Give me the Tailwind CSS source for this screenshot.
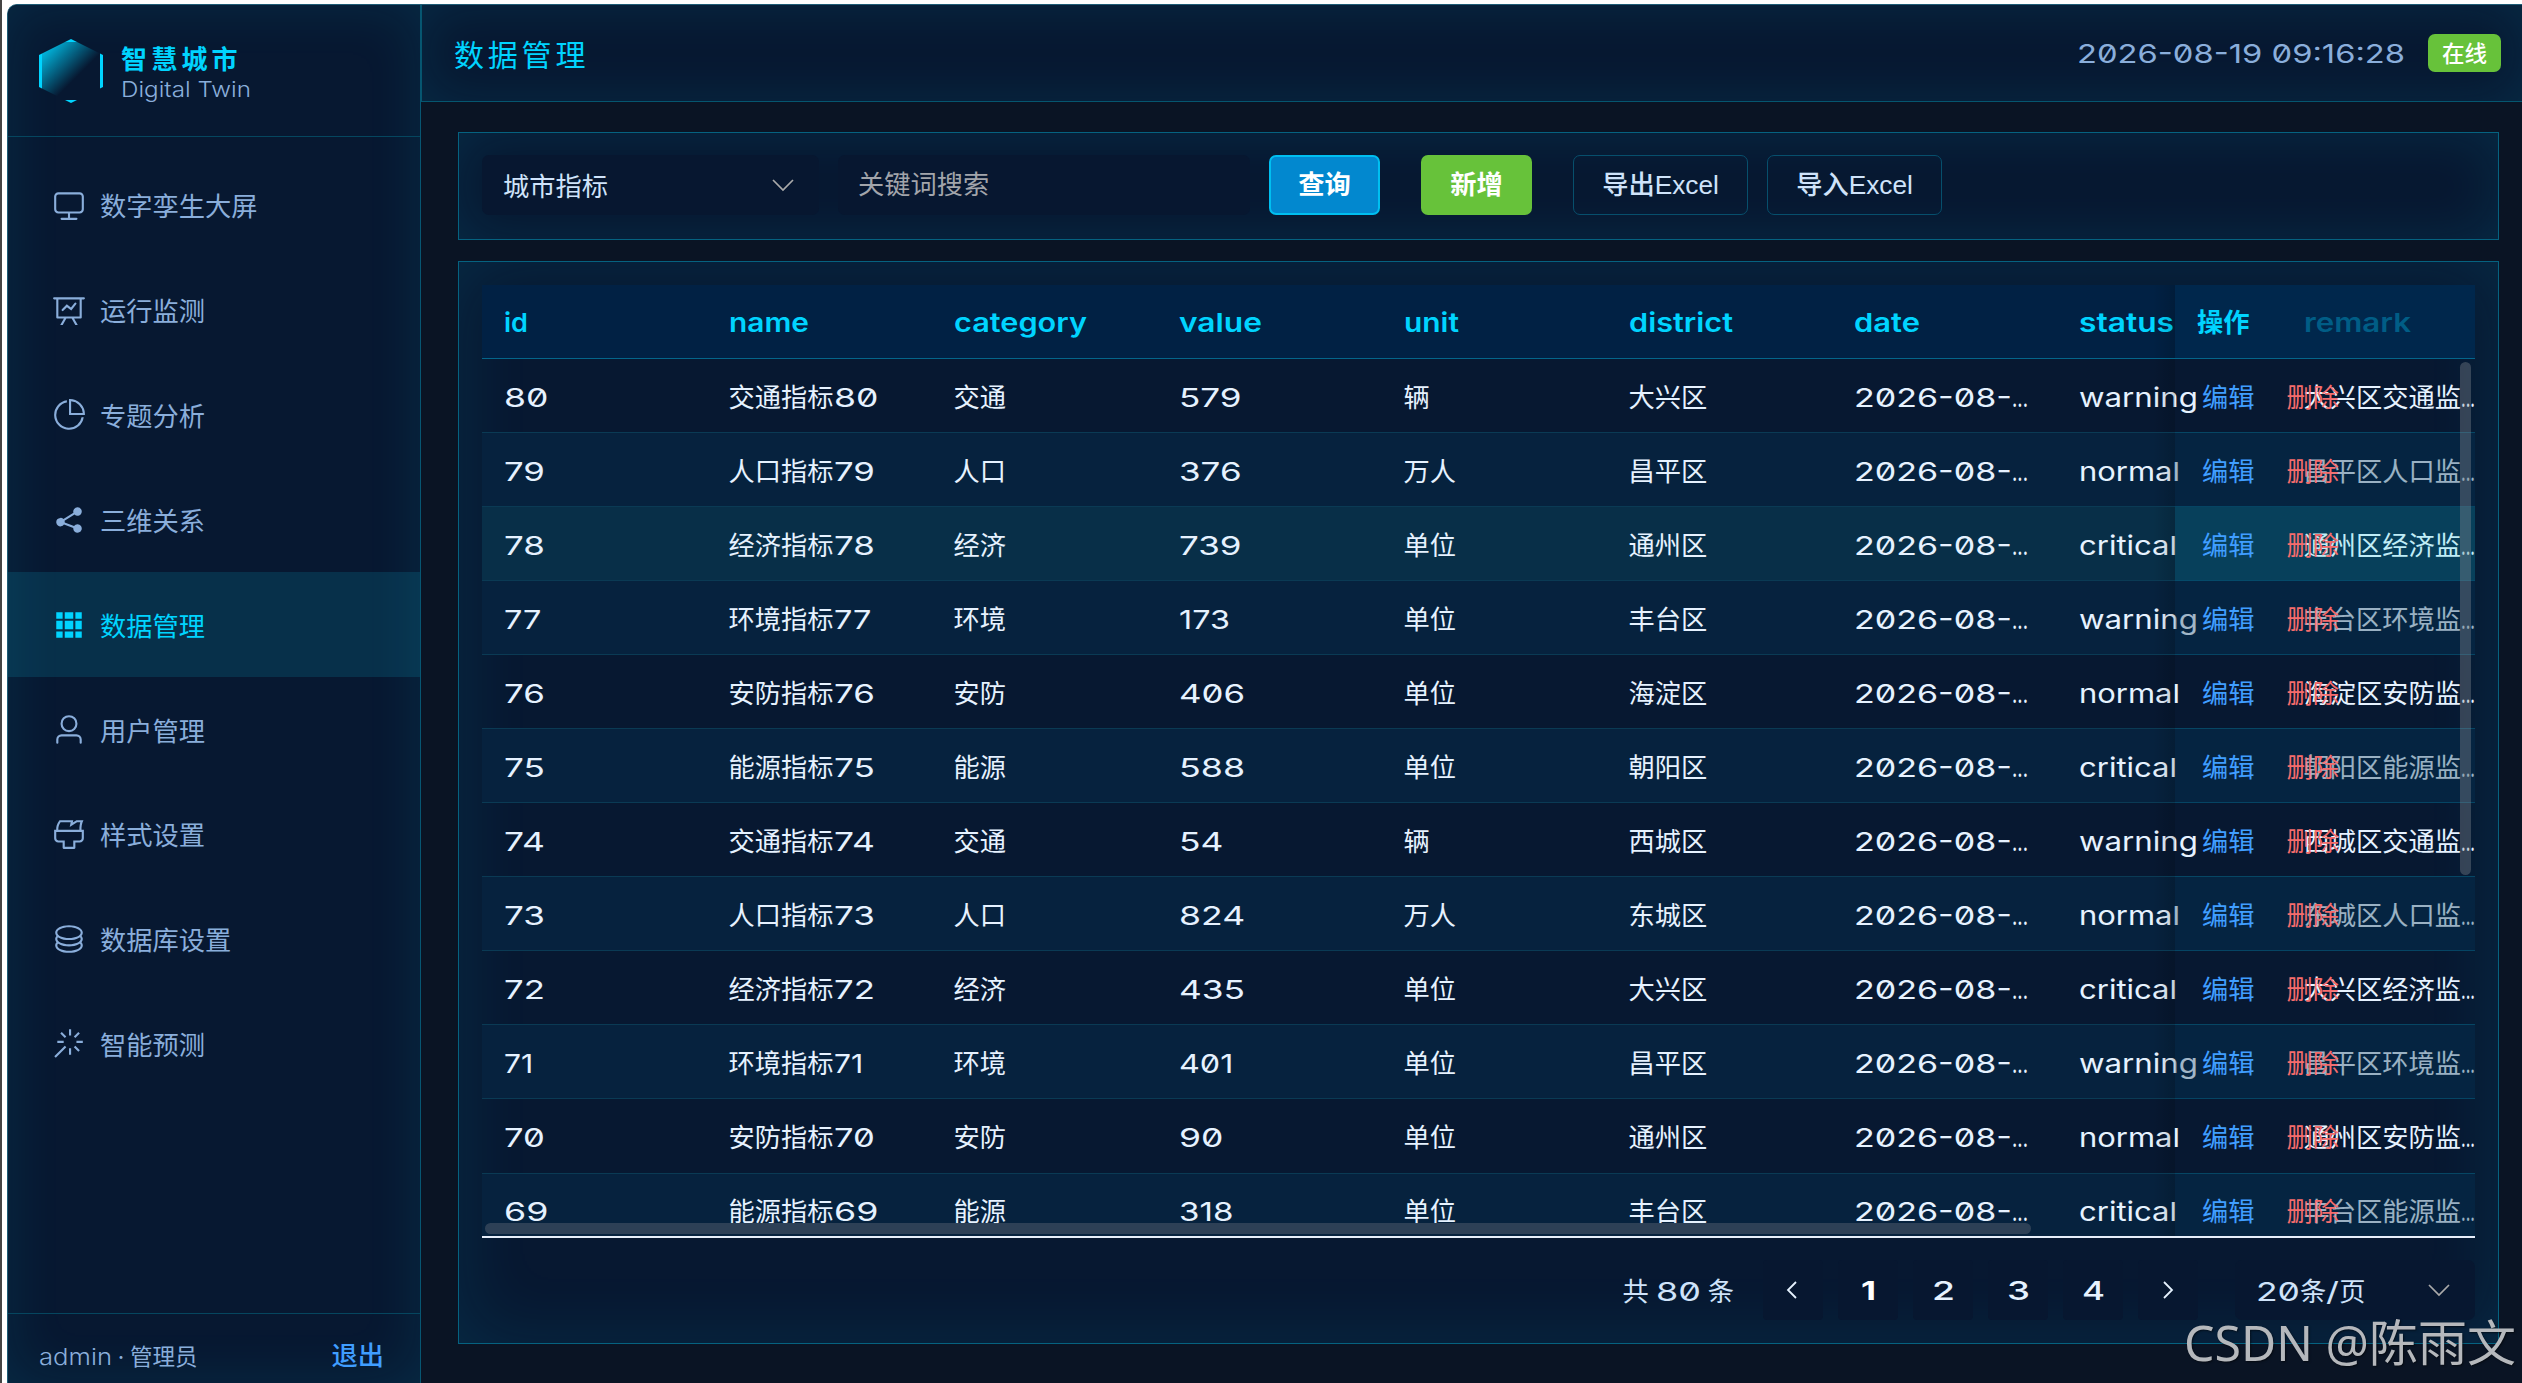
<!DOCTYPE html>
<html lang="zh-CN">
<head>
<meta charset="utf-8">
<title>智慧城市 - 数据管理</title>
<script src="https://cdn.jsdelivr.net/npm/@tailwindcss/browser@4"></script>
</head>
<body class="w-[2522px] h-[1383px] overflow-hidden bg-white font-[Inter,'Noto_Sans_CJK_SC',sans-serif] [font-feature-settings:'zero'] text-[26.25px] leading-none whitespace-nowrap border-l-2 border-[#444] pl-[5px] pt-[4px] relative">
<div class="flex h-[1379px] w-[2515px] rounded-tl-[10px] overflow-hidden bg-[#0a1424] border-l border-t border-[#1d5c76]">

  <aside class="w-[413px] h-full shrink-0 flex flex-col bg-[#071831] border-r border-[#075672] shadow-[inset_0_0_56px_rgba(0,212,255,0.1)]">
    <div class="h-[132px] shrink-0 flex items-start border-b border-[#05465f] pl-[31px] pt-[34px]">
      <div class="w-[64px] h-[64px] shrink-0 border-[3px] border-[#00d4ff] bg-[linear-gradient(135deg,#00d4ff_0%,transparent_60%)] [clip-path:polygon(50%_0,100%_25%,100%_75%,50%_100%,0_75%,0_25%)]"></div>
      <div class="pl-[18px] pt-[7px]">
        <div class="text-[26px] font-bold tracking-[4.2px] text-[#00d4ff] leading-[28px]">智慧城市</div>
        <div class="text-[22px] text-[#8aaedb] font-light leading-[28px] pt-px"><span data-w="130">Digital Twin</span></div>
      </div>
    </div>
    <nav id="nav" class="flex-1 pt-[16px]"></nav>
    <div class="h-[70px] shrink-0 border-t border-[#05465f] flex items-center justify-between pl-[31px] pr-[36px] pt-[17px]">
      <div class="text-[22.5px] text-[#8aaedb] flex items-center"><span class="font-light" data-w="73">admin</span><span class="w-[18px] text-center">·</span><span>管理员</span></div>
      <div class="font-medium text-[#409eff] pb-[2px]">退出</div>
    </div>
  </aside>

  <main class="flex-1 min-w-0 flex flex-col">
    <header class="h-[97px] shrink-0 border-l border-b border-[#05566f] bg-[#071831] shadow-[inset_0_0_56px_rgba(0,212,255,0.1)] flex items-center pl-[32px] pr-[21px]">
      <h1 class="text-[30px] tracking-[3.8px] text-[#00d4ff] pt-[3px]">数据管理</h1>
      <div class="ml-auto flex items-center">
        <span class="text-[#8aaedb] pt-[2px]" data-w="328">2026-08-19 09:16:28</span>
        <span class="ml-[23px] w-[73px] h-[38px] rounded-[7px] bg-[#67c23a] text-white text-[22.5px] font-medium flex items-center justify-center pt-[2px]">在线</span>
      </div>
    </header>

    <section class="mt-[30px] ml-[37px] w-[2041px] h-[108px] shrink-0 border border-[#056280] bg-[#071831] shadow-[inset_0_0_56px_rgba(0,212,255,0.1)] flex items-start pl-[23px] pt-[22px]">
      <div class="w-[337px] h-[60px] rounded-[7px] bg-[#071730] text-[#cfe3fa] flex items-center justify-between pl-[21px] pr-[25px]"><span class="pt-[5px]">城市指标</span>
        <svg class="w-[22px] h-[14px]" viewBox="0 0 22 14" fill="none" stroke="#aaa" stroke-width="1.7"><path d="M1 2l10 10L21 2"/></svg>
      </div>
      <div class="ml-[19px] w-[412px] h-[60px] rounded-[7px] bg-[#071730] text-[#a2a5ab] flex items-center pl-[20px] pt-px">关键词搜索</div>
      <div class="ml-[19px] w-[111px] h-[60px] rounded-[7px] border-2 border-[#00bff0] bg-[#0288cf] text-white font-bold flex items-center justify-center pt-px">查询</div>
      <div class="ml-[41px] w-[111px] h-[60px] rounded-[7px] bg-[#67c23a] text-white font-bold flex items-center justify-center pt-px">新增</div>
      <div class="ml-[41px] w-[175px] h-[60px] rounded-[7px] border border-[#064f6c] text-[#cfe3fa] font-medium font-['Liberation_Sans','Noto_Sans_CJK_SC',sans-serif] flex items-center justify-center pt-px">导出Excel</div>
      <div class="ml-[19px] w-[175px] h-[60px] rounded-[7px] border border-[#064f6c] text-[#cfe3fa] font-medium font-['Liberation_Sans','Noto_Sans_CJK_SC',sans-serif] flex items-center justify-center pt-px">导入Excel</div>
    </section>

    <section class="mt-[21px] ml-[37px] w-[2041px] h-[1083px] shrink-0 border border-[#056280] bg-[#071831] shadow-[inset_0_0_75px_rgba(0,212,255,0.1)] pl-[23px] pt-[23px]">
      <div class="w-[1993px] h-[953px] relative overflow-hidden border-b-2 border-[#e6eefa]">
        <div id="head" class="h-[74px] relative flex items-center bg-[#012144] border-b border-[#04658a] text-[#00d4ff] font-semibold pt-[3px]"></div>
        <div id="rows" class="text-[#e6f2ff]"></div>
        <div class="absolute left-[3px] bottom-[2px] w-[1546px] h-[11px] rounded-full bg-[#2f4257]/95"></div>
        <div class="absolute right-[4px] top-[77px] w-[11px] h-[513px] rounded-full bg-[#909399]/35"></div>
      </div>
      <div class="h-[60px] mt-[22px] w-[1993px] flex items-center justify-end gap-[15px]">
        <div class="text-[#cfe3fa] flex items-center gap-[7px] mr-[14px] pt-[4px]">共<span data-w="45">80</span>条</div>
        <div class="w-[60px] h-[60px] rounded-[4px] bg-[#071730] flex items-center justify-center pr-[4px]"><svg class="w-[11px] h-[18px]" viewBox="0 0 11 18" fill="none" stroke="#e6f2ff" stroke-width="1.8"><path d="M10 1L2 9l8 8"/></svg></div>
        <div class="w-[60px] h-[60px] rounded-[4px] bg-[#071730] text-white font-bold flex items-center justify-center pt-[3px]"><span data-w="15">1</span></div>
        <div class="w-[60px] h-[60px] rounded-[4px] bg-[#071730] text-[#e6f2ff] font-medium flex items-center justify-center pt-[3px]"><span data-w="23">2</span></div>
        <div class="w-[60px] h-[60px] rounded-[4px] bg-[#071730] text-[#e6f2ff] font-medium flex items-center justify-center pt-[3px]"><span data-w="23">3</span></div>
        <div class="w-[60px] h-[60px] rounded-[4px] bg-[#071730] text-[#e6f2ff] font-medium flex items-center justify-center pt-[3px]"><span data-w="23">4</span></div>
        <div class="w-[60px] h-[60px] rounded-[4px] bg-[#071730] flex items-center justify-center"><svg class="w-[11px] h-[18px]" viewBox="0 0 11 18" fill="none" stroke="#e6f2ff" stroke-width="1.8"><path d="M1 1l8 8-8 8"/></svg></div>
        <div class="ml-[22px] w-[240px] h-[60px] rounded-[7px] bg-[#071730] text-[#cfe3fa] flex items-center pl-[21px] pr-[25px]"><div class="flex pt-[4px]"><span data-w="44">20</span>条<span data-w="13">/</span>页</div>
          <svg class="ml-auto w-[22px] h-[14px]" viewBox="0 0 22 14" fill="none" stroke="#aaa" stroke-width="1.7"><path d="M1 2l10 10L21 2"/></svg>
        </div>
      </div>
    </section>
  </main>
</div>
<div class="absolute left-[2182px] top-[1312px] text-[49px] leading-[60px] text-[#b5b8bc] font-['Noto_Sans','Noto_Sans_CJK_SC',sans-serif] [text-shadow:1px_1px_2px_#0008]"><span data-w="185">CSDN @</span>陈雨文</div>

<script>
const icons = [
  ['数字孪生大屏', 'M544 768v128h192a32 32 0 1 1 0 64H288a32 32 0 1 1 0-64h192V768H192A128 128 0 0 1 64 640V256a128 128 0 0 1 128-128h640a128 128 0 0 1 128 128v384a128 128 0 0 1-128 128H544zM192 192a64 64 0 0 0-64 64v384a64 64 0 0 0 64 64h640a64 64 0 0 0 64-64V256a64 64 0 0 0-64-64H192z'],
  ['运行监测', 'M359.168 768H160a32 32 0 0 1-32-32V192H64a32 32 0 0 1 0-64h896a32 32 0 1 1 0 64h-64v544a32 32 0 0 1-32 32H665.216l110.848 192h-73.856L591.36 768H433.024L322.176 960H248.32l110.848-192zM832 192H192v512h640V192zM342.656 534.656a32 32 0 1 1-45.312-45.312L444.992 341.76l125.44 94.08L679.04 300.032a32 32 0 1 1 49.92 39.936L581.632 524.224 451.008 426.24 342.656 534.592z'],
  ['专题分析', 'M448 68.48v64.832A384.128 384.128 0 0 0 512 896a384.128 384.128 0 0 0 378.688-320h64.768A448.128 448.128 0 0 1 64 512 448.128 448.128 0 0 1 448 68.48zM576 97.28V448h350.72A384.064 384.064 0 0 0 576 97.28zM512 64V33.152A448 448 0 0 1 990.848 512H512V64z'],
  ['三维关系', 'm679.872 348.8-301.76 188.608a127.808 127.808 0 0 1 5.12 52.16l279.936 104.96a128 128 0 1 1-22.464 59.904l-279.872-104.96a128 128 0 1 1-16.64-166.272l301.696-188.608a128 128 0 1 1 33.92 54.272z'],
  ['数据管理', 'M640 384v256H384V384h256zm64 0h192v256H704V384zm-64 512H384V704h256v192zm64 0V704h192v192H704zm-64-768v192H384V128h256zm64 0h192v192H704V128zM320 384v256H128V384h192zm0 512H128V704h192v192zm0-768v192H128V128h192z'],
  ['用户管理', 'M512 512a192 192 0 1 0 0-384 192 192 0 0 0 0 384zm0 64a256 256 0 1 1 0-512 256 256 0 0 1 0 512zm320 320v-96a96 96 0 0 0-96-96H288a96 96 0 0 0-96 96v96a32 32 0 1 1-64 0v-96a160 160 0 0 1 160-160h448a160 160 0 0 1 160 160v96a32 32 0 1 1-64 0z'],
  ['样式设置', 'M896 448H128v192a64 64 0 0 0 64 64h192v192h256V704h192a64 64 0 0 0 64-64V448zm-770.752-64c0-47.552 5.248-90.24 15.552-128 14.72-54.016 42.496-107.392 83.2-160h417.28l-15.36 70.336L736 96h211.2c-24.832 42.88-41.92 96.256-51.2 160a663.872 663.872 0 0 0-6.144 128H960v256a128 128 0 0 1-128 128H704v160a32 32 0 0 1-32 32H352a32 32 0 0 1-32-32V768H192A128 128 0 0 1 64 640V384h61.248zm64 0h636.544c-2.048-45.824.256-91.584 6.848-137.216 4.48-30.848 10.688-59.776 18.688-86.784h-96.64l-221.12 141.248L561.92 160H256.512c-25.856 37.888-43.776 75.456-53.952 112.832-8.768 32.064-13.248 69.12-13.312 111.168z'],
  ['数据库设置', 'm161.92 580.736 29.888 58.88C171.328 659.776 160 681.728 160 704c0 82.304 155.328 160 352 160s352-77.696 352-160c0-22.272-11.392-44.16-31.808-64.32l30.464-58.432C903.936 615.808 928 657.664 928 704c0 129.728-188.544 224-416 224S96 833.728 96 704c0-46.592 24.32-88.576 65.92-123.264zm0-192 29.888 58.88C171.328 467.84 160 489.792 160 512c0 82.304 155.328 160 352 160s352-77.696 352-160c0-22.272-11.392-44.16-31.808-64.32l30.464-58.432C903.936 423.808 928 465.664 928 512c0 129.728-188.544 224-416 224S96 641.728 96 512c0-46.592 24.32-88.576 65.92-123.264zM512 544c-227.456 0-416-94.272-416-224S284.544 96 512 96s416 94.272 416 224-188.544 224-416 224zm0-64c196.672 0 352-77.696 352-160S708.672 160 512 160s-352 77.696-352 160 155.328 160 352 160z'],
  ['智能预测', 'M512 64h64v192h-64V64zm0 576h64v192h-64V640zM160 480v-64h192v64H160zm576 0v-64h192v64H736zM249.856 199.04l45.248-45.184L430.848 289.6 385.6 334.848 249.856 199.104zM657.152 606.4l45.248-45.248 135.744 135.744-45.248 45.248L657.152 606.4zM114.048 923.2 68.8 877.952l316.8-316.8 45.248 45.248-316.8 316.8zM702.4 334.848 657.152 289.6l135.744-135.744 45.248 45.248L702.4 334.848z']
];
document.getElementById('nav').innerHTML = icons.map(([t, d], i) =>
  `<div class="h-[104.85px] flex items-center pl-[44px] ${i === 4 ? 'bg-[#10bfdc]/15 text-[#00d4ff]' : 'text-[#8aaedb]'}"><svg class="w-[34px] h-[34px] mr-[14px]" viewBox="0 0 1024 1024" fill="currentColor"><path d="${d}"/></svg><span class="pt-[4px]">${t}</span></div>`).join('');

// Horizontal advance of each run of digits, in pixels
const digits = s => [...s].reduce((w, c) => w + (c === '7' ? 18.2 : c === '1' ? 10 : 21.7), 1);
const num = s => `<span data-w="${digits(s)}">${s}</span>`;

const heads = [['id', 24], ['name', 80], ['category', 133], ['value', 83], ['unit', 55], ['district', 104], ['date', 66], ['status', 95]];
const shade = '<div class="absolute right-full top-0 w-[22px] h-full bg-linear-to-r from-transparent to-black/15"></div>';
document.getElementById('head').innerHTML = heads.map(([t, w]) =>
  `<div class="w-[225px] shrink-0 pl-[22px]"><span data-w="${w}">${t}</span></div>`).join('') +
  `<div class="pl-[22px] text-[#00658c]"><span data-w="107">remark</span></div>
   <div class="absolute right-0 top-0 w-[300px] h-[73px] bg-[#004070]/20 flex items-center pl-[22px] pt-[4px] font-bold">${shade}操作</div>`;

const kinds = {交通: '辆', 人口: '万人'};
const widths = {warning: 119, normal: 101, critical: 98};
const data = [
  ['80', '交通', '579', '大兴区', 'warning'], ['79', '人口', '376', '昌平区', 'normal'], ['78', '经济', '739', '通州区', 'critical'],
  ['77', '环境', '173', '丰台区', 'warning'], ['76', '安防', '406', '海淀区', 'normal'], ['75', '能源', '588', '朝阳区', 'critical'],
  ['74', '交通', '54', '西城区', 'warning'], ['73', '人口', '824', '东城区', 'normal'], ['72', '经济', '435', '大兴区', 'critical'],
  ['71', '环境', '401', '昌平区', 'warning'], ['70', '安防', '90', '通州区', 'normal'], ['69', '能源', '318', '丰台区', 'critical']
];
const cell = h => `<div class="w-[225px] shrink-0 pl-[21.5px] flex items-center">${h}</div>`;
document.getElementById('rows').innerHTML = data.map(([id, c, v, dist, st], i) => {
  const bg = i === 2 ? 'bg-[#082f48]' : i % 2 ? 'bg-[#06223e]' : 'bg-transparent';
  const fix = i === 2 ? 'bg-[#00a0c8]/15' : i % 2 ? 'bg-[#032c4a]/30' : 'bg-transparent';
  const rem = i % 2 ? 'text-[#dcebf8]' : i === 2 ? 'text-[#e0faff]' : 'text-[#e6f2ff]';
  return `<div class="h-[74.06px] relative flex items-center pt-[5px] border-b border-[#0a3a54] ${bg}">
    ${cell(num(id))}${cell(c + '指标' + num(id))}${cell(c)}${cell(num(v))}${cell(kinds[c] || '单位')}${cell(dist)}
    ${cell('<span data-w="158">2026-08-</span><span data-w="16">...</span>')}${cell(`<span data-w="${widths[st]}">${st}</span>`)}
    <div class="pl-[21.5px] flex ${rem}">${dist}${c}监<span data-w="14">...</span></div>
    <div class="absolute right-0 top-0 w-[300px] h-[74.06px] border-b border-[#044b6b]/70 ${fix} flex items-center pl-[27px] pt-[5px] gap-[32px]">${shade}<span class="text-[#409eff]">编辑</span><span class="text-[#f56c6c]">删除</span></div>
  </div>`;
}).join('');

const fit = new ResizeObserver(entries => entries.forEach(({target: el, contentRect: r}) => {
  const w = +el.dataset.w;
  el.style.marginRight = (w - r.width) + 'px';
  el.style.transform = `scaleX(${w / r.width})`;
}));
document.querySelectorAll('[data-w]').forEach(el => {
  el.style.display = 'inline-block';
  el.style.whiteSpace = 'pre';
  el.style.flexShrink = 0;
  el.style.transformOrigin = '0 50%';
  fit.observe(el);
});
</script>
</body>
</html>
